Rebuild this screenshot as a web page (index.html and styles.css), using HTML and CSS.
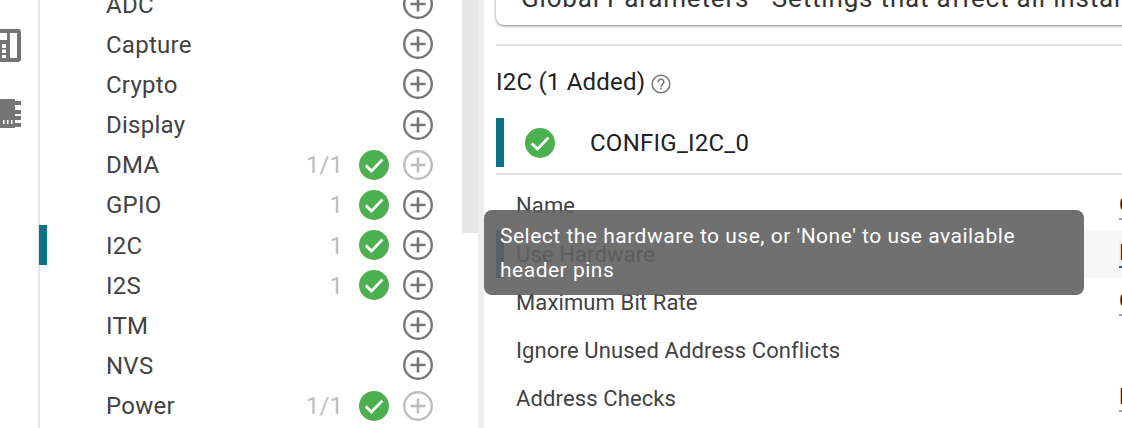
FILE: index.html
```html
<!DOCTYPE html>
<html lang="en">
<head>
    <meta charset="UTF-8">
    <title>SysConfig</title>
    <link rel="stylesheet" href="styles.css">
</head>
<body>
    <div class="app">
        <nav class="rail">
            <svg width="21" height="33" viewBox="0 0 21 33">
                <path fill-rule="evenodd" fill="#757575" d="M0 0h18a3 3 0 0 1 3 3v27a3 3 0 0 1-3 3H0zM10 4v25h7V4zM0 4v7h7V4zM2 15v4h4v-4zM2 20.500v3.500h4v-3.500zM2 26v3h4v-3z"/>
            </svg>
            <svg width="21" height="29" viewBox="0 0 21 29">
                <path fill="#757575" d="M0 0h15v2h6v4h-6v5h6v4h-6v2h6v4h-6v3h6v4h-6v1H0z"/>
                <path fill="#fff" d="M3 21h1.500v4H3zM7 21h1.500v4H7zM11 21h1.500v4H11z"/>
            </svg>
        </nav>

        <aside class="modules">
            <ul class="module-list">
                <li class="module"><span class="module-name">ADC</span><svg class="add"><use href="#add"/></svg></li>
                <li class="module"><span class="module-name">Capture</span><svg class="add"><use href="#add"/></svg></li>
                <li class="module"><span class="module-name">Crypto</span><svg class="add"><use href="#add"/></svg></li>
                <li class="module"><span class="module-name">Display</span><svg class="add"><use href="#add"/></svg></li>
                <li class="module"><span class="module-name">DMA</span><span class="count">1/1</span><svg class="ok"><use href="#ok"/></svg><svg class="add off"><use href="#add"/></svg></li>
                <li class="module"><span class="module-name">GPIO</span><span class="count">1</span><svg class="ok"><use href="#ok"/></svg><svg class="add"><use href="#add"/></svg></li>
                <li class="module active"><span class="module-name">I2C</span><span class="count">1</span><svg class="ok"><use href="#ok"/></svg><svg class="add"><use href="#add"/></svg></li>
                <li class="module"><span class="module-name">I2S</span><span class="count">1</span><svg class="ok"><use href="#ok"/></svg><svg class="add"><use href="#add"/></svg></li>
                <li class="module"><span class="module-name">ITM</span><svg class="add"><use href="#add"/></svg></li>
                <li class="module"><span class="module-name">NVS</span><svg class="add"><use href="#add"/></svg></li>
                <li class="module"><span class="module-name">Power</span><span class="count">1/1</span><svg class="ok"><use href="#ok"/></svg><svg class="add off"><use href="#add"/></svg></li>
            </ul>
            <div class="scroll-thumb"></div>
            <div class="scroll-track"></div>
        </aside>

        <main class="content">
            <div class="global-card">Global Parameters - Settings that affect all instances</div>
            <hr class="divider">
            <h2 class="section-title">I2C (1 Added)
                <svg class="help" width="20" height="20" viewBox="0 0 20 20">
                    <circle cx="10" cy="10" r="8.800" fill="none" stroke="#757575" stroke-width="1.500"/>
                    <path fill="none" stroke="#757575" stroke-width="1.500" d="M7.200 8a2.800 2.800 0 1 1 4.400 2.200c-1 .8-1.600 1.100-1.600 2.300"/>
                    <rect x="9.200" y="13.600" width="1.600" height="1.700" fill="#757575"/>
                </svg>
            </h2>
            <div class="instance">
                <svg class="ok"><use href="#ok"/></svg>
                <span class="instance-name">CONFIG_I2C_0</span>
            </div>
            <div class="params">
                <div class="param"><span class="param-name">Name</span><span class="param-value">C</span></div>
                <div class="param selected"><span class="param-name">Use Hardware</span><span class="param-value">I</span></div>
                <div class="param"><span class="param-name">Maximum Bit Rate</span><span class="param-value">C</span></div>
                <div class="param"><span class="param-name">Ignore Unused Address Conflicts</span></div>
                <div class="param"><span class="param-name">Address Checks</span><span class="param-value">F</span></div>
            </div>
        </main>
    </div>

    <div class="tooltip">Select the hardware to use, or 'None' to use available header pins</div>

    <svg class="defs">
        <symbol id="add" viewBox="0 0 30 30">
            <circle cx="15" cy="15" r="13.800" fill="none" stroke="currentColor" stroke-width="2.400"/>
            <path fill="currentColor" d="M13.700 7.500h2.600v6.200h6.200v2.600h-6.200v6.200h-2.600v-6.200H7.500v-2.600h6.200z"/>
        </symbol>
        <symbol id="ok" viewBox="0 0 30 30">
            <circle cx="15" cy="15" r="15" fill="#4caf50"/>
            <path fill="none" stroke="#fff" stroke-width="2.800" d="M6.800 15.600l5.600 5.400L23.400 9.600"/>
        </symbol>
    </svg>
</body>
</html>
```

FILE: styles.css
```css
html, body {
    margin: 0;
    padding: 0;
    height: 100%;
    overflow: hidden;
    background: #fff;
}

body {
    font-family: Roboto, "Liberation Sans", sans-serif;
    color: #212121;
}

.defs {
    display: none;
}

.app {
    display: flex;
    height: 443px;
    margin-top: -15px;
}

.rail {
    width: 38px;
    flex: none;
    border-right: 2px solid #e6e6e6;
    display: flex;
    flex-direction: column;
    gap: 37px;
    padding-top: 44px;
    box-sizing: content-box;
}

.modules {
    flex: none;
    width: 444px;
    display: flex;
}

.module-list {
    list-style: none;
    margin: -0.9px 0 0;
    padding: 0;
    width: 422px;
    flex: none;
}

.module {
    height: 40.15px;
    padding: 0 29px 0 66px;
    box-sizing: border-box;
    display: flex;
    align-items: center;
    position: relative;
}

.module.active::before {
    content: "";
    position: absolute;
    left: -1px;
    top: 0;
    width: 8px;
    height: 40px;
    background: #0e7285;
}

.module-name {
    flex: 1;
    padding-top: 1.1px;
    font-size: 24px;
    letter-spacing: 0.25px;
    color: #424242;
}

.count {
    padding-top: 1.1px;
    font-size: 24px;
    color: #bdbdbd;
    margin-right: 16px;
}

.module .ok {
    width: 30px;
    height: 30px;
    margin-right: 14px;
}

.add {
    width: 30px;
    height: 30px;
    color: #757575;
}

.add.off {
    color: #bdbdbd;
}

.scroll-thumb {
    width: 16px;
    height: 248px;
    background: #e6e6e6;
    flex: none;
}

.scroll-track {
    flex: 1;
    background: #eee;
}

.content {
    flex: 1;
    min-width: 0;
    padding-left: 12px;
    overflow: hidden;
    white-space: nowrap;
}

.global-card {
    height: 40px;
    margin-right: -200px;
    padding: 0 25px;
    font-size: 26px;
    line-height: 26px;
    letter-spacing: 0.82px;
    color: #333;
    border-radius: 0 0 8px 8px;
    box-shadow: 0 1px 3px rgba(0, 0, 0, 0.5);
}

.divider {
    height: 2px;
    margin: 19px 0 0;
    border: none;
    background: #e0e0e0;
}

.section-title {
    display: flex;
    align-items: center;
    gap: 6px;
    height: 72px;
    margin: 0;
    font-size: 24px;
    font-weight: 400;
    letter-spacing: 0.2px;
}

.help {
    margin-top: 4px;
}

.instance {
    height: 49px;
    display: flex;
    align-items: center;
    gap: 35px;
    padding-left: 21px;
    border-left: 8px solid #0e7285;
    margin-bottom: 6px;
    position: relative;
}

.instance .ok {
    width: 30px;
    height: 30px;
    flex: none;
}

.instance-name {
    font-size: 24px;
    font-weight: 450;
    letter-spacing: 0.25px;
}

.params {
    border-top: 2px solid #e0e0e0;
    padding-top: 6.9px;
}

.param {
    height: 48.1px;
    display: flex;
    align-items: center;
    padding-left: 20px;
    font-size: 22px;
    letter-spacing: 0.12px;
    color: #424242;
}

.param-name {
    width: 603px;
    flex: none;
}

.param-value {
    height: 26px;
    flex: 1;
    line-height: 26px;
    border-bottom: 2px solid #9e9e9e;
    color: #212121;
}

.selected {
    background: #f7f7f7;
    box-shadow: inset 8px 0 #0e7285;
}

.selected .param-value {
    background: #eee;
    border-bottom-color: #0e7285;
}

.tooltip {
    position: absolute;
    left: 484px;
    top: 210px;
    width: 600px;
    height: 85px;
    box-sizing: border-box;
    padding: 9px 16px;
    border-radius: 8px;
    background: rgba(97, 97, 97, 0.9);
    color: #fff;
    font-size: 21px;
    line-height: 34px;
    letter-spacing: 0.5px;
}
```
